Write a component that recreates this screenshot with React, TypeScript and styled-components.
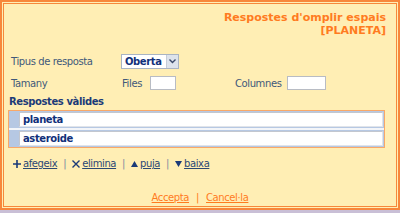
import React from "react"
import styled, { createGlobalStyle } from "styled-components"

const GlobalStyle = createGlobalStyle`
  html, body {
    margin: 0;
    padding: 0;
    background: #c9bfd6;
  }
  body {
    font-family: "DejaVu Sans", Verdana, sans-serif;
    font-size: 10px;
    letter-spacing: -0.4px;
  }
`

const Frame = styled.div`
  width: 400px;
  height: 210px;
  box-sizing: border-box;
  border: 2px solid #f7873a;
  padding: 1px;
  background: #ffeeb4;
`

const Inner = styled.div`
  height: 100%;
  box-sizing: border-box;
  border: 1px solid #f7873a;
  display: flex;
  flex-direction: column;
  padding: 7px 10px 0 4px;
`

const Title = styled.h1`
  margin: 0;
  align-self: flex-end;
  text-align: right;
  font-size: 11px;
  line-height: 13px;
  font-weight: bold;
  letter-spacing: 0;
  color: #ff7b1f;
`

const Form = styled.div`
  display: flex;
  flex-direction: column;
  margin-top: 13px;
  padding-left: 3px;
`

const Row = styled.div<{ $h: number }>`
  display: flex;
  align-items: center;
  height: ${({ $h }) => $h}px;
  color: #41597a;
`

const Label = styled.span<{ $w: number }>`
  width: ${({ $w }) => $w}px;
  flex-shrink: 0;
`

const Select = styled.div`
  display: flex;
  align-items: stretch;
  width: 58px;
  height: 15px;
  margin-left: -1px;
  box-sizing: border-box;
  border: 1px solid #a9b4c3;
  background: #fff;
  color: #10307a;
  font-weight: bold;
`

const SelectText = styled.span`
  flex: 1;
  padding-left: 3px;
  line-height: 13px;
`

const SelectButton = styled.span`
  width: 11px;
  background: #dde3ec;
  border-left: 1px solid #c5ccd8;
  display: flex;
  align-items: center;
  justify-content: center;
`

const SmallInput = styled.div<{ $w: number }>`
  width: ${({ $w }) => $w}px;
  height: 14px;
  box-sizing: border-box;
  border: 1px solid #b8bcc4;
  background: #fff;
`

const Section = styled.div`
  margin-top: 2px;
  padding-left: 1px;
  color: #1b3a78;
  font-weight: bold;
  line-height: 12px;
`

const Answers = styled.div`
  margin: 2px 0 0 0;
  width: 377px;
  box-sizing: border-box;
  border: 1px solid #f9a868;
  display: flex;
  flex-direction: column;
  gap: 2px;
  background: #f3f5f9;
`

const AnswerRow = styled.div`
  display: flex;
  background: #b6c8e3;
  padding: 1px 1px 1px 10px;
  height: 17px;
  box-sizing: border-box;
`

const AnswerInput = styled.div`
  flex: 1;
  background: #fff;
  border: 1px solid #c3c7cf;
  border-right-color: #e1e4ea;
  border-bottom-color: #e1e4ea;
  color: #10307a;
  font-weight: bold;
  padding-left: 3px;
  line-height: 13px;
`

const Actions = styled.div`
  display: flex;
  align-items: center;
  margin-top: 10px;
  padding-left: 5px;
  color: #2b4874;
`

const Action = styled.a`
  display: flex;
  align-items: center;
  gap: 2px;
  color: #2b4874;
  cursor: pointer;
  span {
    text-decoration: underline;
  }
`

const Sep = styled.span<{ $c?: string; $m?: number }>`
  margin: 0 ${({ $m }) => $m ?? 6}px;
  color: ${({ $c }) => $c ?? "#7a8aa0"};
`

const Footer = styled.div`
  margin-top: auto;
  margin-bottom: 3px;
  display: flex;
  justify-content: center;
  align-items: center;
  padding-left: 6px;
`

const FooterLink = styled.a`
  color: #ff7b1f;
  text-decoration: underline;
  cursor: pointer;
`

const Arrow = () => (
  <svg width="7" height="5" viewBox="0 0 7 5">
    <path d="M0.5 0.5 L3.5 3.5 L6.5 0.5" stroke="#3a4a6a" strokeWidth="1.4" fill="none" />
  </svg>
)

const PlusIcon = () => (
  <svg width="8" height="8" viewBox="0 0 8 8">
    <path d="M4 0 V8 M0 4 H8" stroke="#1b3a78" strokeWidth="1.6" />
  </svg>
)

const CrossIcon = () => (
  <svg width="8" height="8" viewBox="0 0 8 8">
    <path d="M0.5 0.5 L7.5 7.5 M7.5 0.5 L0.5 7.5" stroke="#1b3a78" strokeWidth="1.4" />
  </svg>
)

const UpIcon = () => (
  <svg width="7" height="6" viewBox="0 0 7 6">
    <path d="M3.5 0 L7 6 H0 Z" fill="#1b3a78" />
  </svg>
)

const DownIcon = () => (
  <svg width="7" height="6" viewBox="0 0 7 6">
    <path d="M0 0 H7 L3.5 6 Z" fill="#1b3a78" />
  </svg>
)

export default function App() {
  return (
    <>
      <GlobalStyle />
      <Frame>
        <Inner>
          <Title>
            Respostes d'omplir espais
            <br />
            [PLANETA]
          </Title>
          <Form>
            <Row $h={22}>
              <Label $w={111}>Tipus de resposta</Label>
              <Select>
                <SelectText>Oberta</SelectText>
                <SelectButton>
                  <Arrow />
                </SelectButton>
              </Select>
            </Row>
            <Row $h={22}>
              <Label $w={111}>Tamany</Label>
              <Label $w={28}>Files</Label>
              <SmallInput $w={26} />
              <Label $w={59} />
              <Label $w={52}>Columnes</Label>
              <SmallInput $w={39} />
            </Row>
          </Form>
          <Section>Respostes vàlides</Section>
          <Answers>
            <AnswerRow>
              <AnswerInput>planeta</AnswerInput>
            </AnswerRow>
            <AnswerRow>
              <AnswerInput>asteroide</AnswerInput>
            </AnswerRow>
          </Answers>
          <Actions>
            <Action>
              <PlusIcon />
              <span>afegeix</span>
            </Action>
            <Sep>|</Sep>
            <Action>
              <CrossIcon />
              <span>elimina</span>
            </Action>
            <Sep>|</Sep>
            <Action>
              <UpIcon />
              <span>puja</span>
            </Action>
            <Sep>|</Sep>
            <Action>
              <DownIcon />
              <span>baixa</span>
            </Action>
          </Actions>
          <Footer>
            <FooterLink>Accepta</FooterLink>
            <Sep $c="#ff7b1f" $m={7}>|</Sep>
            <FooterLink>Cancel·la</FooterLink>
          </Footer>
        </Inner>
      </Frame>
    </>
  )
}
